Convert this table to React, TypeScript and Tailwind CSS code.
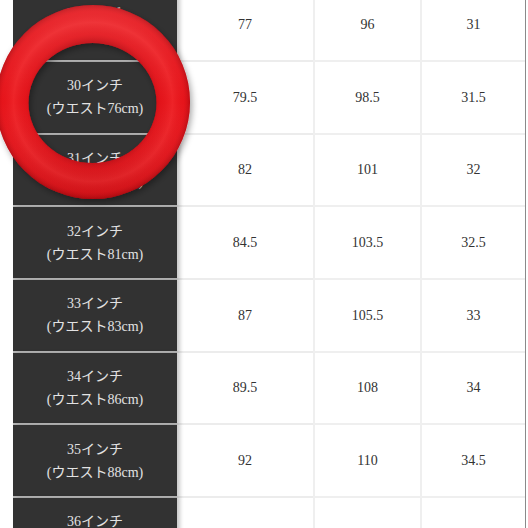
import React from "react";

type SizeRow = {
  inch: string;
  waist: string;
  a: string;
  b: string;
  c: string;
};

const rows: SizeRow[] = [
  { inch: "29", waist: "73", a: "77", b: "96", c: "31" },
  { inch: "30", waist: "76", a: "79.5", b: "98.5", c: "31.5" },
  { inch: "31", waist: "78", a: "82", b: "101", c: "32" },
  { inch: "32", waist: "81", a: "84.5", b: "103.5", c: "32.5" },
  { inch: "33", waist: "83", a: "87", b: "105.5", c: "33" },
  { inch: "34", waist: "86", a: "89.5", b: "108", c: "34" },
  { inch: "35", waist: "88", a: "92", b: "110", c: "34.5" },
  { inch: "36", waist: "91", a: "94.5", b: "112.5", c: "35" },
];

const font = { fontFamily: '"Liberation Serif", "Noto Sans CJK JP", serif' };

const ringPath =
  "M -4 102 A 97 97 0 1 0 190 102 A 97 97 0 1 0 -4 102 Z M 28.5 103 A 64 60 0 1 0 156.5 103 A 64 60 0 1 0 28.5 103 Z";

function Ring() {
  return (
    <svg
      className="pointer-events-none absolute inset-0 z-20"
      width={528}
      height={528}
      viewBox="0 0 528 528"
    >
      <defs>
        <radialGradient id="tube" cx="93" cy="102" r="97" gradientUnits="userSpaceOnUse">
          <stop offset="0.62" stopColor="#9e0008" stopOpacity="0.5" />
          <stop offset="0.7" stopColor="#c80a12" stopOpacity="0.15" />
          <stop offset="0.82" stopColor="#ff4a4a" stopOpacity="0.25" />
          <stop offset="0.93" stopColor="#d40a12" stopOpacity="0.1" />
          <stop offset="1" stopColor="#8a0006" stopOpacity="0.45" />
        </radialGradient>
        <linearGradient id="light" x1="0" y1="0" x2="0" y2="1">
          <stop offset="0" stopColor="#ffffff" stopOpacity="0.1" />
          <stop offset="0.5" stopColor="#ffffff" stopOpacity="0" />
          <stop offset="1" stopColor="#000000" stopOpacity="0.1" />
        </linearGradient>
        <filter id="drop" x="-20%" y="-20%" width="140%" height="140%">
          <feDropShadow dx="2" dy="3" stdDeviation="3" floodColor="#000" floodOpacity="0.35" />
        </filter>
      </defs>
      <g filter="url(#drop)">
        <path fillRule="evenodd" fill="#e8121a" d={ringPath} />
      </g>
      <path fillRule="evenodd" fill="url(#tube)" d={ringPath} />
      <path fillRule="evenodd" fill="url(#light)" d={ringPath} />
    </svg>
  );
}

export default function App() {
  return (
    <div className="relative h-[528px] w-[528px] overflow-hidden bg-white" style={font}>
      <div className="-mt-[10.67px] ml-[13px] w-[513px] border-r border-[#8a8a8a]">
        {rows.map((row) => (
          <div key={row.inch} className="flex h-[72.67px]">
            <div className="relative z-10 flex w-[164px] flex-col items-center justify-center border-b-2 border-[#b8b8b8] bg-[#323232] text-[14px] leading-[23px] text-[#e2e2e2] shadow-[3px_0_4px_rgba(0,0,0,0.22)]">
              <span>{row.inch}インチ</span>
              <span>(ウエスト{row.waist}cm)</span>
            </div>
            <div className="flex w-[136px] items-center justify-center border-b-2 border-[#ececec] text-[14px] text-[#333]">
              {row.a}
            </div>
            <div className="flex w-[107px] items-center justify-center border-b-2 border-l-2 border-[#efefef] text-[14px] text-[#333]">
              {row.b}
            </div>
            <div className="flex w-[105px] items-center justify-center border-b-2 border-l-2 border-[#efefef] text-[14px] text-[#333]">
              {row.c}
            </div>
          </div>
        ))}
      </div>
      <Ring />
    </div>
  );
}
